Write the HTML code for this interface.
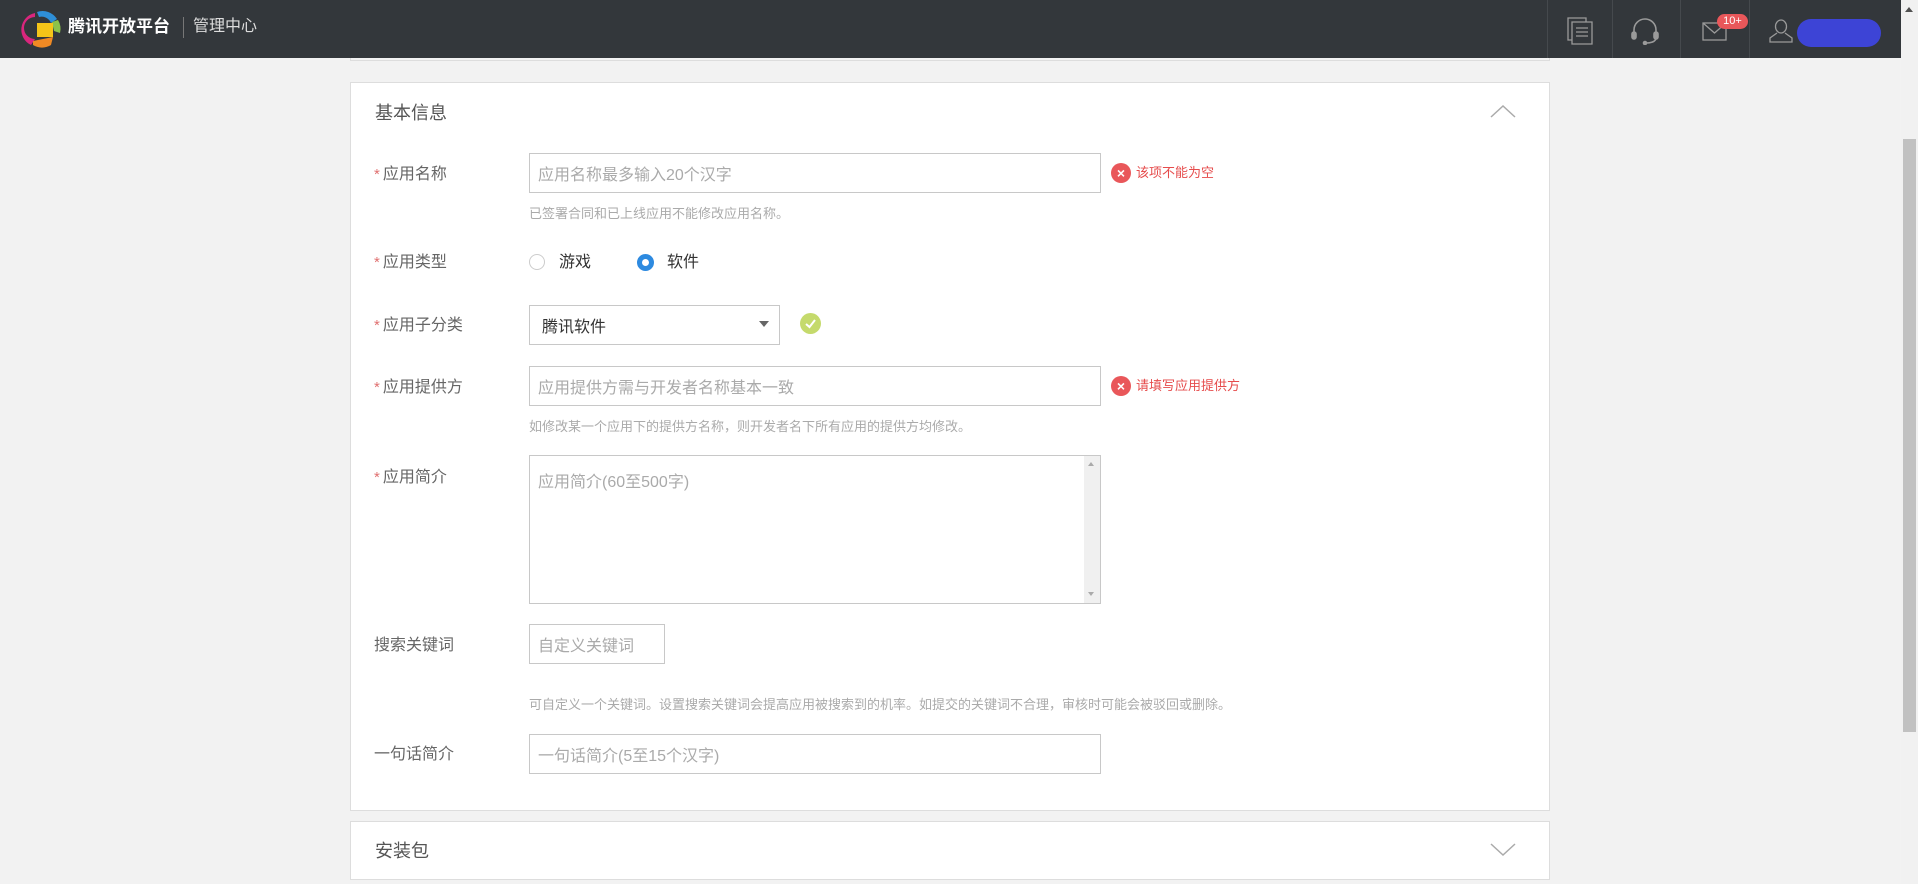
<!DOCTYPE html>
<html><head><meta charset="utf-8"><style>
*{margin:0;padding:0;box-sizing:border-box}
body{width:1918px;height:884px;overflow:hidden;background:#f2f2f2;font-family:"Liberation Sans","Noto Sans CJK SC",sans-serif;position:relative;color:#555}
.abs{position:absolute}
#hdr{left:0;top:0;width:1901px;height:58px;background:#33373b}
.sep{top:0;width:1px;height:58px;background:#45494d}
.panel{background:#fff;border:1px solid #ddd}
.lbl{font-size:16px;color:#666;left:374px;line-height:20px}
.lbl i{color:#e07070;font-style:normal;font-size:15px;margin-right:3px}
.inp{border:1px solid #c8c8c8;background:#fff;font-size:16px;color:#aaa;padding-left:8px;display:flex;align-items:center}
.hint{font-size:13px;color:#aaa;left:529px;line-height:16px}
.err{font-size:13px;color:#e64c4c;line-height:18px;display:flex;align-items:center}
.err b{display:inline-block;width:20px;height:20px;border-radius:50%;background:#e9575a;color:#fff;font-size:14px;text-align:center;line-height:20px;margin-right:5px;font-weight:bold}
</style></head><body>
<div class="abs" style="left:350px;top:40px;width:1200px;height:21px;border:1px solid #ddd;border-top:none"></div>
<div id="hdr" class="abs">
 <svg class="abs" style="left:21px;top:9px" width="42" height="40" viewBox="0 0 42 40">
  <path d="M14 4 A17 17 0 0 0 10 36 L14 30 A11 11 0 0 1 14 8Z" fill="#d9267d"/>
  <path d="M16 3 A17 17 0 0 1 36 10 L30 14 A10 10 0 0 0 18 8Z" fill="#2e8fd8"/>
  <path d="M31 13 L37 11 A17 17 0 0 1 39 24 L33 22Z" fill="#8bc34a"/>
  <rect x="16" y="14" width="16" height="14" fill="#f5c518"/>
  <path d="M12 32 L32 28 L30 36 A17 17 0 0 1 12 36Z" fill="#f08a24"/>
 </svg>
 <div class="abs" style="left:68px;top:17px;font-size:17px;color:#fff;font-weight:bold;line-height:20px">腾讯开放平台</div>
 <div class="abs" style="left:183px;top:17px;width:1px;height:21px;background:#777"></div>
 <div class="abs" style="left:193px;top:17px;font-size:16px;color:#ddd;line-height:20px">管理中心</div>
 <div class="abs sep" style="left:1547px"></div>
 <div class="abs sep" style="left:1612px"></div>
 <div class="abs sep" style="left:1680px"></div>
 <div class="abs sep" style="left:1749px"></div>
 <svg class="abs" style="left:1566px;top:16px" width="28" height="30" viewBox="0 0 28 30" fill="none" stroke="#9a9a9a" stroke-width="1.3"><path d="M2 2h18v22H2z"/><path d="M6 6h20v22H6z" fill="#33373b"/><path d="M10 12h12M10 16h12M10 20h12"/></svg>
 <svg class="abs" style="left:1630px;top:17px" width="30" height="28" viewBox="0 0 30 28" fill="none" stroke="#9a9a9a" stroke-width="1.6"><path d="M4 18 V13 A11 11 0 0 1 26 13 V18"/><rect x="2" y="15" width="4" height="7" rx="2" fill="#9a9a9a"/><rect x="24" y="15" width="4" height="7" rx="2" fill="#9a9a9a"/><path d="M26 22 Q24 26 16 26"/><circle cx="15" cy="26" r="1.5" fill="#9a9a9a"/></svg>
 <svg class="abs" style="left:1702px;top:22px" width="26" height="20" viewBox="0 0 26 20" fill="none" stroke="#9a9a9a" stroke-width="1.3"><rect x="1" y="1" width="23" height="17"/><path d="M1 1 L12.5 11 L24 1"/></svg>
 <div class="abs" style="left:1717px;top:14px;width:31px;height:15px;border-radius:8px;background:#e9575a;color:#fff;font-size:11px;line-height:15px;text-align:center">10+</div>
 <svg class="abs" style="left:1768px;top:18px" width="26" height="26" viewBox="0 0 26 26" fill="none" stroke="#9a9a9a" stroke-width="1.3"><path d="M13 2 a5.5 6.5 0 0 1 0 13 a5.5 6.5 0 0 1 0-13z"/><path d="M9 15 L2 20 V24 H24 V20 L17 15"/></svg>
 <div class="abs" style="left:1797px;top:19px;width:84px;height:28px;border-radius:14px;background:#3d44d6"></div>
</div>
<div class="abs" style="left:1901px;top:0;width:17px;height:884px;background:#f1f1f1"></div>
<div class="abs" style="left:1905px;top:7px;width:0;height:0;border-left:4px solid transparent;border-right:4px solid transparent;border-bottom:5px solid #505050"></div>
<div class="abs" style="left:1903px;top:139px;width:13px;height:593px;background:#c1c1c1"></div>

<div class="abs panel" style="left:350px;top:82px;width:1200px;height:729px"></div>
<div class="abs" style="left:375px;top:102px;font-size:18px;color:#555;line-height:22px">基本信息</div>
<svg class="abs" style="left:1490px;top:103px" width="26" height="16" viewBox="0 0 26 16" fill="none" stroke="#aaa" stroke-width="1.5"><path d="M1 14 L13 3 L25 14"/></svg>

<div class="abs lbl" style="top:165px"><i>*</i>应用名称</div>
<div class="abs inp" style="left:529px;top:153px;width:572px;height:40px">应用名称最多输入20个汉字</div>
<div class="abs err" style="left:1111px;top:163px"><b>×</b>该项不能为空</div>
<div class="abs hint" style="top:206px">已签署合同和已上线应用不能修改应用名称。</div>

<div class="abs lbl" style="top:253px"><i>*</i>应用类型</div>
<div class="abs" style="left:529px;top:254px;width:16px;height:16px;border-radius:50%;border:1px solid #ccc"></div>
<div class="abs" style="left:559px;top:253px;font-size:16px;color:#333;line-height:20px">游戏</div>
<div class="abs" style="left:637px;top:254px;width:17px;height:17px;border-radius:50%;border:5px solid #2d8ae0;background:#fff"></div>
<div class="abs" style="left:667px;top:253px;font-size:16px;color:#333;line-height:20px">软件</div>

<div class="abs lbl" style="top:316px"><i>*</i>应用子分类</div>
<div class="abs inp" style="left:529px;top:305px;width:251px;height:40px;color:#333;padding-left:12px">腾讯软件</div>
<div class="abs" style="left:759px;top:321px;border-left:5px solid transparent;border-right:5px solid transparent;border-top:6px solid #666"></div>
<svg class="abs" style="left:800px;top:313px" width="21" height="21" viewBox="0 0 21 21"><circle cx="10.5" cy="10.5" r="10.5" fill="#c5da6c"/><path d="M6 11 L9.5 14 L15 7" stroke="#fff" stroke-width="2" fill="none"/></svg>

<div class="abs lbl" style="top:378px"><i>*</i>应用提供方</div>
<div class="abs inp" style="left:529px;top:366px;width:572px;height:40px">应用提供方需与开发者名称基本一致</div>
<div class="abs err" style="left:1111px;top:376px"><b>×</b>请填写应用提供方</div>
<div class="abs hint" style="top:419px">如修改某一个应用下的提供方名称，则开发者名下所有应用的提供方均修改。</div>

<div class="abs lbl" style="top:468px"><i>*</i>应用简介</div>
<div class="abs inp" style="left:529px;top:455px;width:572px;height:149px;align-items:flex-start;padding-top:12px">应用简介(60至500字)</div>
<div class="abs" style="left:1084px;top:456px;width:16px;height:147px;background:#f0f0f0"></div>
<div class="abs" style="left:1088px;top:462px;border-left:3px solid transparent;border-right:3px solid transparent;border-bottom:4px solid #aaa"></div>
<div class="abs" style="left:1088px;top:592px;border-left:3px solid transparent;border-right:3px solid transparent;border-top:4px solid #aaa"></div>

<div class="abs lbl" style="top:636px">搜索关键词</div>
<div class="abs inp" style="left:529px;top:624px;width:136px;height:40px">自定义关键词</div>
<div class="abs hint" style="top:697px">可自定义一个关键词。设置搜索关键词会提高应用被搜索到的机率。如提交的关键词不合理，审核时可能会被驳回或删除。</div>

<div class="abs lbl" style="top:745px">一句话简介</div>
<div class="abs inp" style="left:529px;top:734px;width:572px;height:40px">一句话简介(5至15个汉字)</div>

<div class="abs panel" style="left:350px;top:821px;width:1200px;height:59px"></div>
<div class="abs" style="left:375px;top:840px;font-size:18px;color:#555;line-height:22px">安装包</div>
<svg class="abs" style="left:1490px;top:842px" width="26" height="16" viewBox="0 0 26 16" fill="none" stroke="#aaa" stroke-width="1.5"><path d="M1 2 L13 13 L25 2"/></svg>
</body></html>
